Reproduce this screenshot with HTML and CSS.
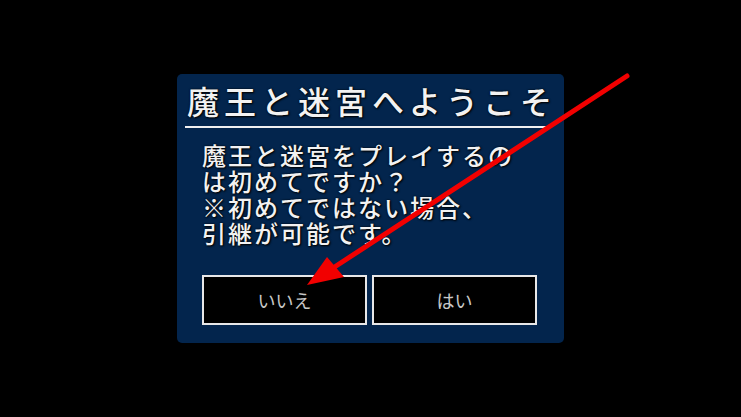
FILE: index.html
```html
<!DOCTYPE html>
<html lang="ja">
<head>
  <meta charset="UTF-8" />
  <meta name="viewport" content="width=device-width, initial-scale=1.0"/>
  <title>魔王と迷宮</title>
  <link rel="stylesheet" href="styles.css">
</head>
<body>

<!-- welcome dialog -->
<div class="dialog">
  <h1 class="dialog-title">魔王と迷宮へようこそ</h1>
  <div class="dialog-rule"></div>
  <p class="dialog-text">魔王と迷宮をプレイするの<br>は初めてですか？<br>※初めてではない場合、<br>引継が可能です。</p>
  <div class="choices">
    <button class="choice-btn">いいえ</button>
    <button class="choice-btn">はい</button>
  </div>
</div>

<!-- pointer arrow drawn on top -->
<svg class="pointer" width="741" height="417" viewBox="0 0 741 417">
  <line x1="627" y1="76" x2="333" y2="268" stroke="#f20000" stroke-width="5" stroke-linecap="round"/>
  <polygon points="307,285 327,257 344,277" fill="#f20000"/>
</svg>

</body>
</html>
```

FILE: styles.css
```css
body {
  margin: 0;
  height: 100vh;
  background: #000;
  display: flex;
  align-items: center;
  justify-content: center;
  font-family: 'Noto Sans CJK JP', 'Noto Sans', sans-serif;
  overflow: hidden;
}
.dialog {
  box-sizing: border-box;
  width: 387px;
  height: 269px;
  margin-top: -1px;
  padding-top: 6px;
  background: #03254d;
  border-radius: 5px;
}
.dialog-title {
  margin: 0 0 0 10px;
  font-size: 32px;
  font-weight: 500;
  line-height: 40px;
  letter-spacing: 5px;
  color: #f2f2f2;
  text-shadow: 1px 1px 2px #000, 0 0 2px #000;
  white-space: nowrap;
}
.dialog-rule {
  height: 2px;
  margin: 6px 17px 0 8px;
  background: #f0f0f0;
}
.dialog-text {
  margin: 14px 0 0 25px;
  font-size: 24px;
  font-weight: 500;
  line-height: 26px;
  letter-spacing: 2px;
  color: #f2f2f2;
  text-shadow: 1px 1px 2px #000, 0 0 2px #000;
  white-space: nowrap;
}
.choices {
  display: grid;
  grid-template-columns: 165px 165px;
  gap: 5px;
  margin: 29px 0 0 25px;
}
.choice-btn {
  height: 50px;
  background: #000;
  border: 2px solid #e8e8e8;
  color: #c8c8c8;
  font-family: inherit;
  font-size: 18px;
  padding: 0;
  cursor: pointer;
}
.pointer {
  position: absolute;
  top: 0;
  left: 0;
  pointer-events: none;
}
```
